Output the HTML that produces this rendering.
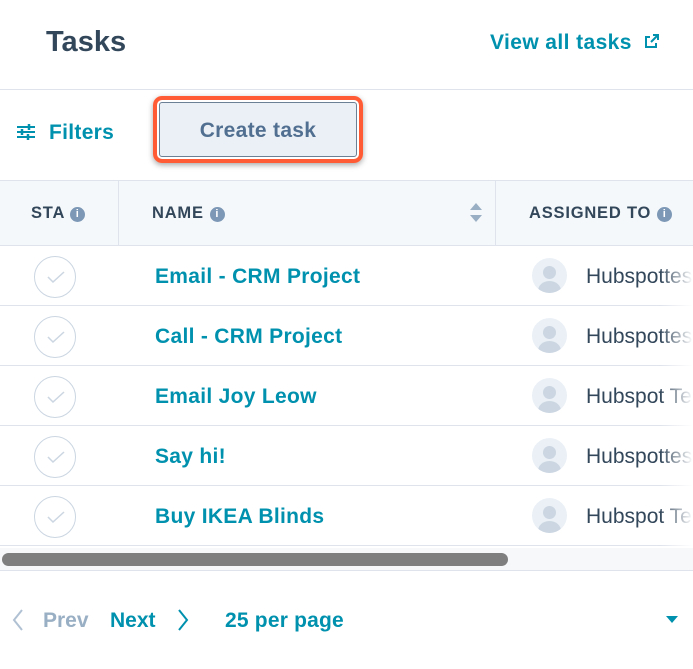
<!DOCTYPE html>
<html><head><style>
*{margin:0;padding:0;box-sizing:border-box}
body{width:693px;height:669px;background:#fff;font-family:"Liberation Sans",sans-serif;position:relative;overflow:hidden;color:#33475b}
.a{position:absolute}
.teal{color:#0091ae;font-weight:bold}
.row{position:absolute;left:0;width:693px;height:60px;border-bottom:1px solid #dfe3eb}
.circ{position:absolute;left:34px;top:10px;width:42px;height:42px;border-radius:50%;border:1px solid #cbd6e2;background:#fff}
.circ svg{position:absolute;left:11px;top:12px}
.av{position:absolute;left:532px;top:12px;width:35px;height:35px;border-radius:50%;background:#eaf0f6;overflow:hidden}
.name{position:absolute;left:155px;top:19px;font-size:21px;font-weight:bold;color:#0091ae;letter-spacing:.3px}
.who{position:absolute;left:586px;top:19px;font-size:21px;color:#33475b;white-space:nowrap}
.info{display:inline-block;width:15px;height:15px;border-radius:50%;background:#7c98b6;color:#fff;font-size:11px;text-align:center;line-height:15px;font-weight:bold;vertical-align:1px;margin-left:6px}
.hd{position:absolute;top:204px;font-size:16.5px;font-weight:bold;letter-spacing:.8px;color:#33475b}
</style></head><body>
<div class="a" style="left:46px;top:26px;font-size:29px;font-weight:bold">Tasks</div>
<div class="a teal" style="left:490px;top:31px;font-size:21px;letter-spacing:.4px">View all tasks</div>
<svg class="a" style="left:644px;top:33px" width="16" height="16" viewBox="0 0 16 16" fill="none" stroke="#0091ae" stroke-width="2"><path d="M9 2h5v5M14 2L7 9M12 10v4H2V4h4"/></svg>
<div class="a" style="left:0;top:89px;width:693px;height:1px;background:#dfe3eb"></div>
<svg class="a" style="left:17px;top:124px" width="18" height="16" viewBox="0 0 18 16" stroke="#0091ae" stroke-width="2"><path d="M0 3h18M0 8h18M0 13h18"/><path d="M12 0v6M5 5v6M11 10v6" stroke-width="2.5"/></svg>
<div class="a teal" style="left:49px;top:121px;font-size:21px;letter-spacing:.3px">Filters</div>
<div class="a" style="left:153px;top:96px;width:210px;height:67px;border:4px solid #ff5c35;border-radius:9px;box-shadow:0 2px 6px rgba(0,0,0,.35)"></div>
<div class="a" style="left:159px;top:102px;width:198px;height:55px;background:#eaf0f6;border:1.5px solid #6b7f95;border-radius:3px;text-align:center;line-height:55px;font-size:21px;font-weight:bold;color:#516f90;letter-spacing:.3px">Create task</div>
<div class="a" style="left:0;top:180px;width:693px;height:66px;background:#f5f8fa;border-top:1px solid #dfe3eb;border-bottom:1px solid #dfe3eb"></div>
<div class="a" style="left:118px;top:180px;width:1px;height:65px;background:#dfe3eb"></div>
<div class="a" style="left:495px;top:180px;width:1px;height:65px;background:#dfe3eb"></div>
<div class="hd" style="left:31px">STA<span class="info" style="margin-left:5px">i</span></div>
<div class="hd" style="left:152px">NAME<span class="info">i</span></div>
<svg class="a" style="left:470px;top:203px" width="12" height="20" viewBox="0 0 12 20" fill="#99afc4"><path d="M6 0l6 7H0zM0 12h12l-6 7z"/></svg>
<div class="hd" style="left:529px">ASSIGNED TO<span class="info">i</span></div>

<div class="row" style="top:246px"><div class="circ"><svg width="20" height="16" viewBox="0 0 20 16" fill="none" stroke="#cbd6e2" stroke-width="1.5"><path d="M2 8l5 5L18 3"/></svg></div><div class="name">Email - CRM Project</div><div class="av"><div class="a" style="left:11px;top:8px;width:13px;height:13px;border-radius:50%;background:#cbd6e2"></div><div class="a" style="left:6px;top:23px;width:23px;height:20px;border-radius:50%;background:#cbd6e2"></div></div><div class="who">Hubspottes</div></div>
<div class="row" style="top:306px"><div class="circ"><svg width="20" height="16" viewBox="0 0 20 16" fill="none" stroke="#cbd6e2" stroke-width="1.5"><path d="M2 8l5 5L18 3"/></svg></div><div class="name">Call - CRM Project</div><div class="av"><div class="a" style="left:11px;top:8px;width:13px;height:13px;border-radius:50%;background:#cbd6e2"></div><div class="a" style="left:6px;top:23px;width:23px;height:20px;border-radius:50%;background:#cbd6e2"></div></div><div class="who">Hubspottes</div></div>
<div class="row" style="top:366px"><div class="circ"><svg width="20" height="16" viewBox="0 0 20 16" fill="none" stroke="#cbd6e2" stroke-width="1.5"><path d="M2 8l5 5L18 3"/></svg></div><div class="name">Email Joy Leow</div><div class="av"><div class="a" style="left:11px;top:8px;width:13px;height:13px;border-radius:50%;background:#cbd6e2"></div><div class="a" style="left:6px;top:23px;width:23px;height:20px;border-radius:50%;background:#cbd6e2"></div></div><div class="who">Hubspot Te</div></div>
<div class="row" style="top:426px"><div class="circ"><svg width="20" height="16" viewBox="0 0 20 16" fill="none" stroke="#cbd6e2" stroke-width="1.5"><path d="M2 8l5 5L18 3"/></svg></div><div class="name">Say hi!</div><div class="av"><div class="a" style="left:11px;top:8px;width:13px;height:13px;border-radius:50%;background:#cbd6e2"></div><div class="a" style="left:6px;top:23px;width:23px;height:20px;border-radius:50%;background:#cbd6e2"></div></div><div class="who">Hubspottes</div></div>
<div class="row" style="top:486px"><div class="circ"><svg width="20" height="16" viewBox="0 0 20 16" fill="none" stroke="#cbd6e2" stroke-width="1.5"><path d="M2 8l5 5L18 3"/></svg></div><div class="name">Buy IKEA Blinds</div><div class="av"><div class="a" style="left:11px;top:8px;width:13px;height:13px;border-radius:50%;background:#cbd6e2"></div><div class="a" style="left:6px;top:23px;width:23px;height:20px;border-radius:50%;background:#cbd6e2"></div></div><div class="who">Hubspot Te</div></div>
<div class="a" style="left:660px;top:246px;width:33px;height:301px;background:linear-gradient(90deg,rgba(255,255,255,0),#fff)"></div>

<div class="a" style="left:0;top:548px;width:693px;height:23px;background:#f7f8fa;border-bottom:1px solid #dfe3eb"></div>
<div class="a" style="left:2px;top:553px;width:506px;height:13px;border-radius:7px;background:#7f7f7f"></div>

<svg class="a" style="left:12px;top:609px" width="12" height="22" viewBox="0 0 12 22" fill="none" stroke="#b0c1d4" stroke-width="2"><path d="M10 1L2 11l8 10"/></svg>
<div class="a" style="left:43px;top:609px;font-size:21px;font-weight:bold;color:#99afc4">Prev</div>
<div class="a teal" style="left:110px;top:609px;font-size:21px">Next</div>
<svg class="a" style="left:177px;top:609px" width="12" height="22" viewBox="0 0 12 22" fill="none" stroke="#0091ae" stroke-width="2"><path d="M2 1l8 10-8 10"/></svg>
<div class="a teal" style="left:225px;top:609px;font-size:21px;letter-spacing:.2px">25 per page</div>
<svg class="a" style="left:666px;top:616px" width="12" height="8" viewBox="0 0 12 8" fill="#0091ae"><path d="M0 0h12L6 7z"/></svg>
</body></html>
